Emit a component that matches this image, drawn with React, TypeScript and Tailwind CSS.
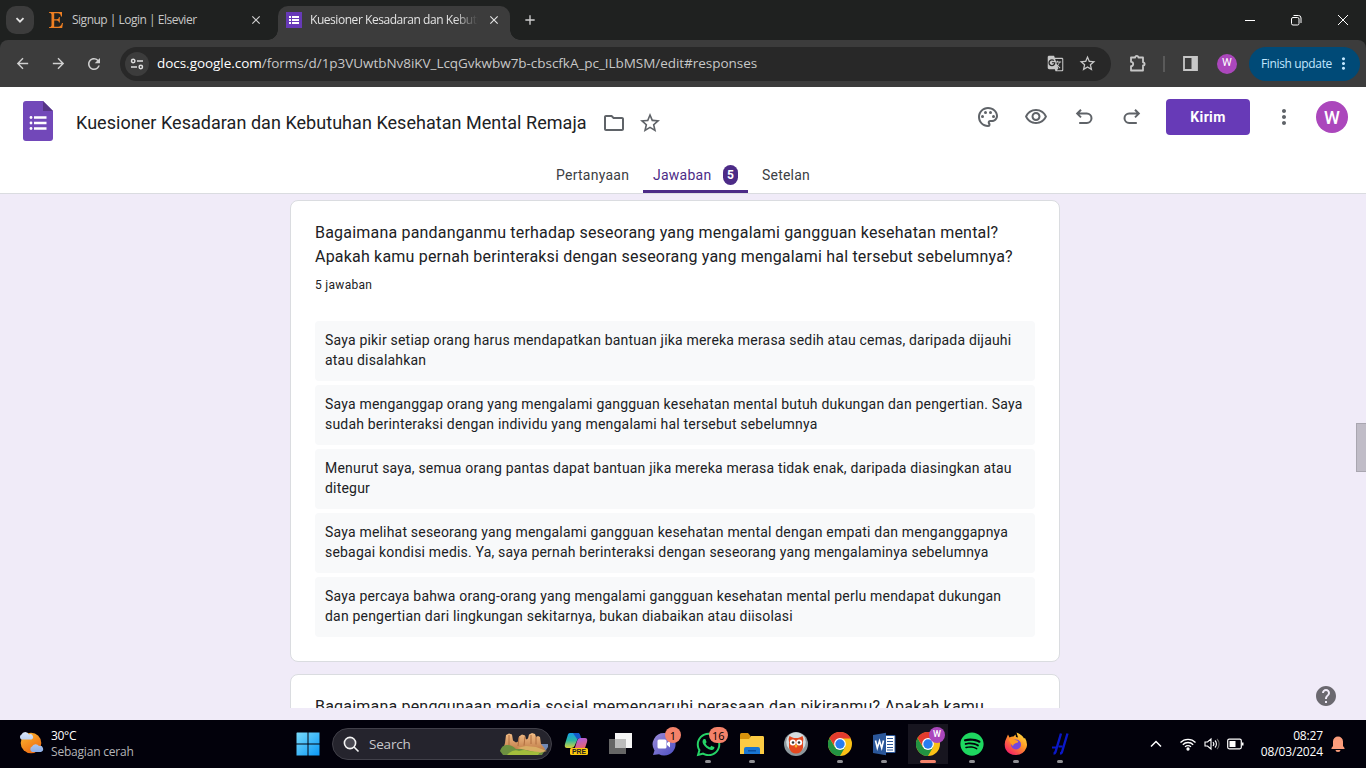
import React from "react";
import {
  MdArrowBack, MdArrowForward, MdRefresh, MdStarOutline, MdOutlinePalette,
  MdOutlineVisibility, MdMoreVert, MdHelp, MdGTranslate, MdClose, MdAdd, MdOutlineFolder,
} from "react-icons/md";
import { FaWhatsapp, FaSpotify } from "react-icons/fa";

const ui = "font-['Open_Sans','Noto_Sans',sans-serif]";
const rb = "font-[Roboto,sans-serif]";

function TuneIcon() {
  return (
    <svg width="14" height="14" viewBox="0 0 14 14" fill="none" stroke="#dedede" strokeWidth="1.5">
      <circle cx="3.2" cy="4" r="1.7" />
      <path d="M7 4h6M1 10h6" />
      <circle cx="10.8" cy="10" r="1.7" />
    </svg>
  );
}

function TabStrip() {
  return (
    <div className={`flex h-10 bg-[#1f2120] ${ui}`}>
      <div className="ml-1.5 mt-1.5 flex h-7 w-7 items-center justify-center rounded-[10px] bg-[#3c3c3c]">
        <svg width="10" height="10" viewBox="0 0 10 10" fill="none" stroke="#e3e3e3" strokeWidth="1.8"><path d="M1.5 3.2 5 6.7 8.5 3.2" /></svg>
      </div>
      <div className="ml-[14px] flex w-[217px] items-center">
        <svg className="mr-[9px] ml-px" width="14" height="16" viewBox="0 0 14 16" fill="#ee7f22"><path d="M0 0h13v4.500h-1Q11.500 1.200 9 1.200H5.200v6h2.600Q9.800 7.200 10 5h.8v5.600H10Q9.800 8.400 7.800 8.400H5.200v6.400h4Q12 14.800 13 11h1l-.8 5H0v-.8q2.500-.1 2.500-1.700v-11Q2.500.9 0 .8z" /></svg>
        <span className="text-[12px] tracking-[-0.5px] whitespace-nowrap text-[#c7c7c7]">Signup | Login | Elsevier</span>
        <MdClose className="ml-auto mr-[2px]" color="#d0d0d0" size={14} />
      </div>
      <div className="relative ml-[13px] mt-1.5 flex h-[34px] w-[232px] items-center rounded-t-[10px] bg-[#3c3c3c] pb-1.5 pl-2">
        <span className="absolute bottom-0 -left-2.5 size-2.5 bg-[radial-gradient(circle_at_0_0,transparent_9.5px,#3c3c3c_10px)]" />
        <span className="absolute bottom-0 -right-2.5 size-2.5 bg-[radial-gradient(circle_at_100%_0,transparent_9.5px,#3c3c3c_10px)]" />
        <svg className="shrink-0" width="16" height="16" viewBox="0 0 16 16"><path fill="#673ab7" d="M0 0h16v16H0z" /><path fill="#fff" d="M3 4h2v2H3zM6 4h7v2H6zM3 7h2v2H3zM6 7h7v2H6zM3 10h2v2H3zM6 10h7v2H6z" /></svg>
        <span className="ml-2 w-[168px] overflow-hidden text-[12px] tracking-[-0.45px] whitespace-nowrap text-[#e3e3e3] [mask-image:linear-gradient(90deg,#000_86%,transparent)]">Kuesioner Kesadaran dan Kebutuhan</span>
        <MdClose className="ml-[9px] shrink-0" color="#e3e3e3" size={14} />
      </div>
      <MdAdd className="ml-3 mt-3" color="#d0d0d0" size={16} />
      <svg className="ml-auto mt-[14px] mr-[17px]" width="104" height="12" viewBox="0 0 104 12" fill="none" stroke="#fff" strokeWidth="1">
        <path d="M0 6.500h10M48 3.500h4.500a1.500 1.500 0 0 1 1.500 1.500V9.500a1.500 1.500 0 0 1-1.500 1.500h-4.500a1.500 1.500 0 0 1-1.500-1.500V5a1.500 1.500 0 0 1 1.500-1.500zM48.500 1.500h5a2.500 2.500 0 0 1 2.500 2.500v5M93 1l10 10M103 1 93 11" />
      </svg>
    </div>
  );
}

function Toolbar() {
  return (
    <div className="bg-[#1f2120]">
      <div className={`flex h-[47px] items-center rounded-t-[8px] bg-[#3c3c3c] ${ui}`}>
        <MdArrowBack className="ml-[14px]" color="#d0d0d0" size={17} />
        <MdArrowForward className="ml-[19px]" color="#d0d0d0" size={17} />
        <MdRefresh className="ml-[18px]" color="#d0d0d0" size={18} />
        <div className="ml-[17px] flex h-[34px] w-[991px] items-center rounded-full bg-[#282828] pl-[5px]">
          <div className="flex size-6 items-center justify-center rounded-full bg-[#3c3c3c]"><TuneIcon /></div>
          <div className="ml-2 text-[13.500px] tracking-[-0.04px] whitespace-nowrap text-[#c7c7c7]">
            <span className="text-white">docs.google.com</span>/forms/d/1p3VUwtbNv8iKV_LcqGvkwbw7b-cbscfkA_pc_ILbMSM/edit#responses
          </div>
          <MdGTranslate className="ml-auto" color="#c7c7c7" size={17} />
          <MdStarOutline className="ml-[14px] mr-[14px]" color="#c7c7c7" size={19} />
        </div>
        <svg className="ml-[17px]" width="20" height="20" viewBox="0 0 20 20" fill="none" stroke="#c7c7c7" strokeWidth="1.8" strokeLinejoin="round">
          <path d="M3 3.500h4.200a1.600 1.600 0 0 1 3.200 0h4.600v4.800a1.600 1.600 0 0 1 0 3.200v5H3v-4.300a2.200 2.200 0 0 0 0-4.400z" />
        </svg>
        <div className="ml-[15px] h-4 w-0.5 bg-[#5a5a5a]" />
        <svg className="ml-[18px]" width="15" height="15" viewBox="0 0 15 15"><path d="M1 1h13v13H1z" fill="none" stroke="#c7c7c7" strokeWidth="1.8" /><path fill="#c7c7c7" d="M8.500 1h5.500v13H8.500z" /></svg>
        <div className="ml-[19px] flex size-5 items-center justify-center rounded-full bg-[#ab47bc] font-[Roboto,sans-serif] text-[11px] text-white">W</div>
        <div className="ml-3 flex h-[34px] w-[111px] items-center rounded-full bg-[#004a77] pl-3 text-[12px] tracking-[-0.35px] whitespace-nowrap text-[#c2e7ff]">
          Finish update
          <MdMoreVert className="ml-auto mr-[7px]" size={19} />
        </div>
      </div>
    </div>
  );
}

function Header() {
  return (
    <header className={`h-[107px] border-b border-[#dadce0] bg-white ${rb}`}>
      <div className="flex h-[73px] text-[#5f6368]">
        <svg className="ml-[23px] mt-[14px]" width="30" height="40" viewBox="0 0 30 40">
          <path fill="#7248b9" d="M3 0h17l10 10v27a3 3 0 0 1-3 3H3a3 3 0 0 1-3-3V3a3 3 0 0 1 3-3z" />
          <path fill="#563586" d="M20 0l10 10H20z" />
          <g fill="#fff"><circle cx="8" cy="16.500" r="1.400" /><circle cx="8" cy="22" r="1.400" /><circle cx="8" cy="27.500" r="1.400" /><path d="M11 15.300h12.500v2.400H11zM11 20.800h12.500v2.400H11zM11 26.300h12.500v2.400H11z" /></g>
        </svg>
        <h1 className="mt-[23px] ml-[23px] w-[516px] text-[18px] leading-[26px] tracking-[0.04px] whitespace-nowrap text-[#202124]">Kuesioner Kesadaran dan Kebutuhan Kesehatan Mental Remaja</h1>
        <MdOutlineFolder className="mt-6 ml-2.5" size={24} />
        <MdStarOutline className="mt-6 ml-3" size={24} />
        <div className="ml-auto mt-3 flex h-9 items-center">
          <MdOutlinePalette size={24} className="mr-6" />
          <MdOutlineVisibility size={24} className="mr-6" />
          <svg className="mr-6" width="24" height="24" viewBox="0 0 24 24" fill="none" stroke="currentColor" strokeWidth="2"><path d="M9 4.800 5.200 8.600 9 12.400M5.200 8.600h9.600a4.700 4.700 0 0 1 0 9.400H7.200" /></svg>
          <svg className="mr-[22px]" width="24" height="24" viewBox="0 0 24 24" fill="none" stroke="currentColor" strokeWidth="2"><path d="M15 4.800l3.800 3.800-3.800 3.800M18.800 8.600H9.200a4.700 4.700 0 0 0 0 9.400h7.600" /></svg>
          <button className="h-9 w-[84px] rounded bg-[#673ab7] text-[14px] font-bold tracking-[0.35px] text-white">Kirim</button>
          <MdMoreVert size={24} className="ml-[22px]" />
          <div className="ml-5 mr-[18px] flex size-8 items-center justify-center rounded-full bg-[#ab47bc] text-[18px] font-medium text-white">W</div>
        </div>
      </div>
      <nav className="flex h-[33px] pl-[555px] text-[14px] text-[#3c4043]">
        <div className="w-[88px] pt-[5px] pl-px leading-5 tracking-[0.25px]">Pertanyaan</div>
        <div className="flex h-[33px] w-[105px] justify-between border-b-3 border-[#4c2b87] px-2.5 pt-[5px] leading-5 tracking-[0.25px] text-[#4c2b87]">
          Jawaban
          <span className="flex h-5 w-[15px] items-center justify-center rounded-full bg-[#4c2b87] text-[12px] font-bold tracking-normal text-white">5</span>
        </div>
        <div className="pt-[5px] pl-[14px] leading-5 tracking-[0.2px]">Setelan</div>
      </nav>
    </header>
  );
}

const answers = [
  ["Saya pikir setiap orang harus mendapatkan bantuan jika mereka merasa sedih atau cemas, daripada dijauhi", "atau disalahkan"],
  ["Saya menganggap orang yang mengalami gangguan kesehatan mental butuh dukungan dan pengertian. Saya", "sudah berinteraksi dengan individu yang mengalami hal tersebut sebelumnya"],
  ["Menurut saya, semua orang pantas dapat bantuan jika mereka merasa tidak enak, daripada diasingkan atau", "ditegur"],
  ["Saya melihat seseorang yang mengalami gangguan kesehatan mental dengan empati dan menganggapnya", "sebagai kondisi medis. Ya, saya pernah berinteraksi dengan seseorang yang mengalaminya sebelumnya"],
  ["Saya percaya bahwa orang-orang yang mengalami gangguan kesehatan mental perlu mendapat dukungan", "dan pengertian dari lingkungan sekitarnya, bukan diabaikan atau diisolasi"],
];

function Content() {
  return (
    <main className={`relative h-[514px] overflow-hidden bg-[#f0ebf8] pt-1.5 text-[#202124] ${rb}`}>
      <section className="ml-[290px] h-[462px] w-[770px] rounded-lg border border-[#dadce0] bg-white px-6 pt-5">
        <h2 className="text-[16px] leading-6 tracking-[0.2px] whitespace-nowrap">
          Bagaimana pandanganmu terhadap seseorang yang mengalami gangguan kesehatan mental?<br />
          Apakah kamu pernah berinteraksi dengan seseorang yang mengalami hal tersebut sebelumnya?
        </h2>
        <p className="mt-2 text-[12px] leading-4 tracking-[0.3px]">5 jawaban</p>
        <div className="mt-7 flex flex-col gap-1">
          {answers.map(([a, b]) => (
            <div key={a} className="h-[60px] rounded bg-[#f8f9fa] px-2.5 pt-[9px] text-[14px] leading-5 tracking-[0.195px] whitespace-nowrap">{a}<br />{b}</div>
          ))}
        </div>
      </section>
      <section className="mt-3 ml-[290px] h-[120px] w-[770px] rounded-lg border border-[#dadce0] bg-white px-6 pt-5">
        <h2 className="text-[16px] leading-6 tracking-[0.2px] whitespace-nowrap">Bagaimana penggunaan media sosial memengaruhi perasaan dan pikiranmu? Apakah kamu</h2>
      </section>
      <div className="absolute top-[229px] right-0 h-[49px] w-2.5 border border-r-0 border-[#a9a6b0] bg-[#c0bcc7]" />
      <MdHelp className="absolute top-[490px] left-[1314px]" color="#6b6970" size={24} />
    </main>
  );
}

function Chrome() {
  return (
    <svg width="24" height="24" viewBox="0 0 24 24">
      <circle cx="12" cy="12" r="12" fill="#fbc116" />
      <path fill="#229342" d="M1.600 6A12 12 0 0 0 12 24l5.200-9L12 12 6.800 15z" />
      <path fill="#e33b2e" d="M12 6.500h10.700A12 12 0 0 0 1.600 6l5.300 8.500z" />
      <circle cx="12" cy="12" r="5.900" fill="#fff" /><circle cx="12" cy="12" r="4.700" fill="#287cf0" />
    </svg>
  );
}

function Slot({ children, run, active }: { children: React.ReactNode; run?: boolean; active?: boolean }) {
  return (
    <div className={`relative flex h-10 w-11 shrink-0 items-center justify-center ${active ? "bg-[linear-gradient(90deg,transparent_2px,#17151f_2px,#17151f_42px,transparent_42px)]" : ""}`}>
      {children}
      {run && <span className="absolute bottom-px h-[3px] w-1.5 rounded-full bg-[#8f8f94]" />}
      {active && <span className="absolute bottom-px h-[3px] w-4 rounded-full bg-[#f4826a]" />}
    </div>
  );
}

function Badge({ children }: { children: React.ReactNode }) {
  return <span className="absolute top-[3px] left-[23px] flex h-4 min-w-4 items-center justify-center rounded-full bg-[#f4826a] px-[3px] text-[11px] leading-none text-black">{children}</span>;
}

function Taskbar() {
  return (
    <footer className={`flex h-12 items-center bg-[#02010b] text-[12px] text-white ${ui}`}>
      <svg className="ml-[18px]" width="26" height="26" viewBox="0 0 26 26">
        <defs>
          <linearGradient id="sun" x2="0.6" y2="1"><stop stopColor="#fcba31" /><stop offset="1" stopColor="#ee6c13" /></linearGradient>
          <linearGradient id="cloud" x2="0" y2="1"><stop stopColor="#dbe8fb" /><stop offset="1" stopColor="#8eafe7" /></linearGradient>
        </defs>
        <circle cx="13" cy="12" r="10.300" fill="url(#sun)" />
        <path fill="url(#cloud)" d="M3.500 8.500a2.800 2.800 0 0 1 0-5 4 4 0 0 1 7.500 0 2.600 2.600 0 0 1 2.500 5zM14 21a3 3 0 0 1 0-5.400 4 4 0 0 1 7-.5 3 3 0 0 1 2 5.900z" />
      </svg>
      <div className="ml-[7px] w-[245px] leading-4 whitespace-nowrap"><div className="tracking-[-0.3px]">30°C</div><div className="tracking-[-0.2px] text-[#b5b5b8]">Sebagian cerah</div></div>
      <svg width="24" height="24" viewBox="0 0 24 24">
        <defs><linearGradient id="win" gradientUnits="userSpaceOnUse" x2="24" y2="24"><stop stopColor="#7bdcfb" /><stop offset="1" stopColor="#0896f5" /></linearGradient></defs>
        <path fill="url(#win)" d="M1 .5h10.500V11.500H.5V1zM12.500.5h11v11h-11zM.5 12.500h11v11H.5zM12.500 12.500h11v11h-11z" />
      </svg>
      <div className="ml-3 flex h-8 w-[220px] items-center rounded-full border border-[#414049] bg-[#25242d] pl-[10px] text-[13.500px] text-[#c9c9cc]">
        <svg width="17" height="17" viewBox="0 0 17 17" fill="none" stroke="#f4f4f4" strokeWidth="1.6"><circle cx="7" cy="7" r="5.600" fill="#4a4952" /><path d="m11 11 4.500 4.500" /></svg>
        <span className="ml-[9px] tracking-[-0.2px]">Search</span>
        <svg className="ml-auto mr-0.5" width="50" height="24" viewBox="0 0 50 24">
          <defs><linearGradient id="rock" x2="0" y2="1"><stop stopColor="#f3bd86" /><stop offset="1" stopColor="#b8733f" /></linearGradient></defs>
          <path fill="#7189b5" d="M38 12h11v3l-2 3-9 2z" />
          <path fill="url(#rock)" d="M4 18 6 11l1-8 3-1.500 3 1 1 6 3 2 2-1 1-5 3-2 3 1 1 4 2-1 1-4 3-1.500 3 1 1 3 2-1 2 1 1 7 4 5-2 4H9z" />
          <path d="M20 5.500 19 14M26 4.500l-1 9M32 3v9M37 4.500v8M10 3v10" stroke="#a9683a" strokeWidth="0.9" fill="none" />
          <path fill="#6d9040" d="M1 19q2-7 8-6 4 0 8 4l13 0 16 1-3 5H4z" />
          <path fill="#d9ad64" d="m18 16 9-2 10 1 11 4-8 2z" />
          <path fill="#a3bd3c" d="M10 21q5-4 10-2 6-2 9 0l12 1-2 3H8z" />
        </svg>
      </div>
      <div className="ml-[2px] flex">
        <Slot>
          <svg width="26" height="26" viewBox="0 0 26 26">
            <defs>
              <linearGradient id="c1" x2="0" y2="1"><stop stopColor="#159ee8" /><stop offset="0.5" stopColor="#2bb7a0" /><stop offset="1" stopColor="#dbd23a" /></linearGradient>
              <linearGradient id="c2" x2="0.3" y2="1"><stop stopColor="#a25cf3" /><stop offset="1" stopColor="#f2665e" /></linearGradient>
            </defs>
            <path fill="url(#c1)" d="M7 2h8q2 0 1 3l-4 9q-1 3-4 3H4q-3 0-2-4L4.500 5q.5-3 2.500-3z" />
            <path fill="#1459c9" d="M10 2h5q2 0 3 5l-4 1z" />
            <path fill="url(#c2)" d="M17 7h5q3 0 2 4l-3 9H11l3-10q1-3 3-3z" />
            <rect x="7" y="17" width="18" height="7" rx="1.500" fill="#fdc90c" />
            <text x="16" y="23" textAnchor="middle" fontFamily="Liberation Sans" fontWeight="700" fontSize="6.800" fill="#222">PRE</text>
          </svg>
        </Slot>
        <Slot>
          <svg width="25" height="24" viewBox="0 0 25 24"><path fill="#666" d="M1 7h17v15H1z" /><path fill="#f5f5f5" d="M7 1h17v15H7z" /><path fill="#bcbcbc" d="M7 7h11v9H7z" /></svg>
        </Slot>
        <Slot>
          <svg width="24" height="24" viewBox="0 0 24 24">
            <defs><linearGradient id="chat" x2="1" y2="1"><stop stopColor="#9b8bd8" /><stop offset="1" stopColor="#4c4fc3" /></linearGradient></defs>
            <path fill="url(#chat)" d="M12 1a11.300 11.300 0 1 1-5 21.300L1 23l1.500-4.500A11.300 11.300 0 0 1 12 1z" />
            <rect x="5.500" y="7.500" width="9" height="9" rx="1.500" fill="#fff" /><path fill="#fff" d="m15 11 3-2.500v7L15 13z" />
          </svg>
          <Badge>1</Badge>
        </Slot>
        <Slot run><FaWhatsapp size={27} color="#25d366" /><Badge>16</Badge></Slot>
        <Slot run>
          <svg width="26" height="24" viewBox="0 0 26 24"><path fill="#d9930c" d="M1 2.500Q1 1 2.500 1H9l2.500 3V8H1z" /><path fill="#fccb43" d="M1 7h9l2-3h12q1 0 1 1.500V22H1z" /><path fill="#1976d2" d="M5 22v-5q0-2 2-2h12q2 0 2 2v5z" /><path fill="#0b4f9e" d="M9 18h8v1.500H9z" /></svg>
        </Slot>
        <Slot>
          <svg width="26" height="26" viewBox="0 0 26 26">
            <circle cx="13" cy="13" r="12" fill="#8d989d" /><circle cx="13" cy="11" r="9.800" fill="#d5dcdf" />
            <path fill="#e4481f" d="M6.500 5q2.500 1.500 4.500 2h4q2-.5 4.500-2 1.500 3 .5 6v6q-2 5.500-7 5.500T6 17v-6q-1-3 .5-6z" />
            <circle cx="9.800" cy="11.500" r="3" fill="#fff" /><circle cx="16.200" cy="11.500" r="3" fill="#fff" /><circle cx="10" cy="11.500" r="1.300" fill="#333" /><circle cx="16" cy="11.500" r="1.300" fill="#333" /><path fill="#f7b52c" d="m13 13 1.500 2L13 17l-1.500-2z" />
          </svg>
        </Slot>
        <Slot run><Chrome /></Slot>
        <Slot run>
          <svg width="24" height="24" viewBox="0 0 24 24"><path fill="#fff" stroke="#2b579a" d="M13 3.500h10v17H13z" /><path stroke="#2b579a" d="M15 6.500h6M15 9.500h6M15 12.500h6M15 15.500h6M15 18h6" /><path fill="#2b579a" d="M1 3 14 .8v22.400L1 21z" /><path fill="none" stroke="#fff" strokeWidth="1.6" d="m3.500 8.500 1.800 7.500 2.200-7L9.700 16l1.800-7.500" /></svg>
        </Slot>
        <Slot active><Chrome /><span className="absolute top-[3px] left-[23px] flex size-4 items-center justify-center rounded-full bg-[#ab47bc] font-[Roboto,sans-serif] text-[9px] font-medium">W</span></Slot>
        <Slot run><FaSpotify size={24} color="#1ed760" /></Slot>
        <Slot run>
          <svg width="24" height="24" viewBox="0 0 24 24">
            <defs><linearGradient id="ff" x1="1" x2="0.2" y2="1"><stop stopColor="#fff04a" /><stop offset="0.45" stopColor="#ff9a25" /><stop offset="1" stopColor="#f5196a" /></linearGradient></defs>
            <path fill="url(#ff)" d="M2.500 6 4 2.500l1.500 3q2-1.200 4-1l2-2 .5 2.500 2 .5L12.500.5q6 2.500 7.500 6l1-.5q3 5 1.500 9.500-3 7.500-10.500 7.500T1.500 17Q-.5 11 2.500 6z" />
            <circle cx="12" cy="12.500" r="5" fill="#7546dc" /><path fill="#ff9c20" d="M5 7q5 0 8 1.500 3 1.500-1 2.500-3 1-3 3-3-2-4-7z" />
          </svg>
        </Slot>
        <Slot run>
          <svg width="20" height="26" viewBox="0 0 20 26" fill="none" stroke="#0a18c8" strokeWidth="2.4"><path d="M11 2.500 5.500 21q-.5 1.500-2 1.500M17.500 2.500 12 21q-.5 1.500-2 1.500" /><path strokeWidth="1.800" d="M2 16.500h4M8.500 15.500h4" /></svg>
        </Slot>
      </div>
      <svg className="ml-auto" width="12" height="8" viewBox="0 0 12 8" fill="none" stroke="#fff" strokeWidth="1.5"><path d="m1 6.500 5-5 5 5" /></svg>
      <svg className="ml-[17px]" width="18" height="14" viewBox="0 0 18 14" fill="none" stroke="#fff" strokeWidth="1.3"><path d="M1.500 5.500a10.500 10.500 0 0 1 15 0M3.800 7.700a7.300 7.300 0 0 1 10.400 0M6 9.900a4.200 4.200 0 0 1 6 0" /><circle cx="9" cy="12" r="1" fill="#fff" /></svg>
      <svg className="ml-[7px]" width="16" height="14" viewBox="0 0 16 14" fill="none" stroke="#fff" strokeWidth="1.1"><path d="M1 5h2.500L7 2v10L3.500 9H1zM9 5a3 3 0 0 1 0 4M11 3.500a5 5 0 0 1 0 7" /><path stroke="#666" d="M13 2a7 7 0 0 1 0 10" /></svg>
      <svg className="ml-[7px]" width="17" height="12" viewBox="0 0 17 12"><rect x="0.700" y="1.200" width="13.600" height="9.600" rx="1.500" fill="none" stroke="#fff" strokeWidth="1.2" /><path fill="#fff" d="M2.500 3h6v6h-6zM15 4.500h1.500v3H15z" /></svg>
      <div className="ml-2 w-[71px] text-right leading-4 tracking-[-0.15px] whitespace-nowrap">08:27<br />08/03/2024</div>
      <svg className="ml-2 mr-[21px]" width="14" height="16" viewBox="0 0 14 16" fill="#fa9c7b"><path d="M7 .5a5 5 0 0 1 5 5v4.500l1.500 2v1H.5v-1l1.500-2V5.500a5 5 0 0 1 5-5zM4.500 14h5a2.500 2 0 0 1-5 0z" /></svg>
    </footer>
  );
}

export default function App() {
  return (
    <div className="flex h-[768px] w-[1366px] flex-col overflow-hidden bg-[#f0ebf8]">
      <TabStrip />
      <Toolbar />
      <Header />
      <Content />
      <div className="h-3 shrink-0" />
      <Taskbar />
    </div>
  );
}
